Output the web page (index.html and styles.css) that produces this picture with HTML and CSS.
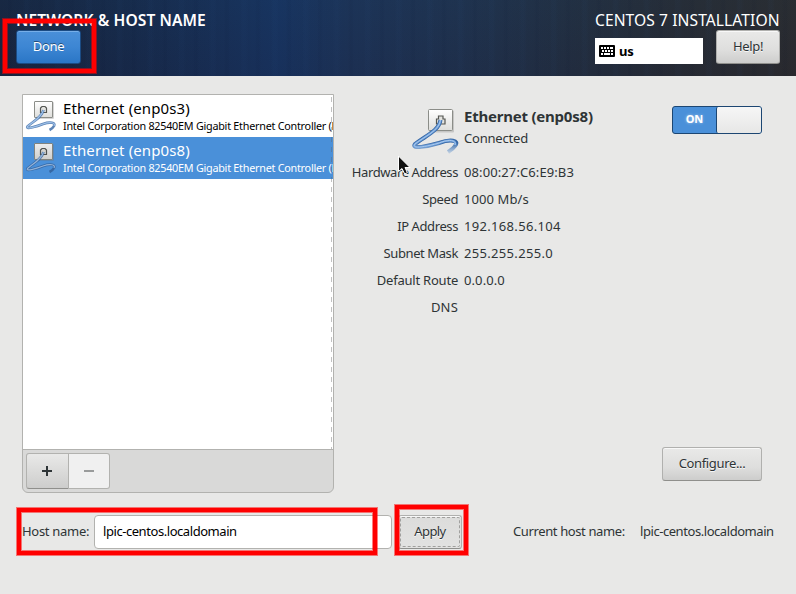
FILE: index.html
```html
<!DOCTYPE html>
<html lang="en">
<head>
<meta charset="utf-8">
<title>Network &amp; Host Name</title>
<link rel="stylesheet" href="styles.css">
</head>
<body>
<svg class="defs" width="0" height="0" aria-hidden="true">
  <defs>
    <linearGradient id="plate" x1="0" y1="0" x2="0" y2="1"><stop offset="0" stop-color="#fff"/><stop offset="1" stop-color="#dededb"/></linearGradient>
    <linearGradient id="fade" gradientUnits="userSpaceOnUse" x1="0" y1="37" x2="0" y2="47"><stop offset="0" stop-color="#3465a4"/><stop offset="1" stop-color="#5f93d1" stop-opacity=".3"/></linearGradient>
    <symbol id="ethernet" viewBox="0 0 48 48">
      <rect x="18" y="4.500" width="25" height="22" rx="1" fill="#777" opacity=".3"/>
      <rect x="17.500" y="3.500" width="24" height="21" rx="1" fill="url(#plate)" stroke="#8b8d88"/>
      <path d="M25.500 18v-5h2v-3h4.500v3h2v5z" fill="#e3e3df" stroke="#555753" stroke-width="1.200"/>
      <path d="M29.500 14C28 25 14 30 4 38C-1 44 18 40 28 37C39 33 49 34 44 40C42 43 40 44 37 46" fill="none" stroke="url(#fade)" stroke-width="4"/>
      <path d="M29.500 14C28 25 14 30 4 38C-1 44 18 40 28 37C38 33 46 34 44 39" fill="none" stroke="#6a9cd8" stroke-width="2.400"/>
      <path d="M29.500 14C28 25 14 30 4 38C-1 44 18 40 28 37C38 33 46 34 44 39" fill="none" stroke="#b4d0ef" stroke-width=".9"/>
    </symbol>
    <symbol id="ethernet-small" viewBox="0 0 32 32">
      <rect x="10" y="2" width="19" height="17" rx="1" fill="#777" opacity=".3"/>
      <rect x="9.500" y="1.500" width="18" height="16" rx=".5" fill="url(#plate)" stroke="#8b8d88"/>
      <path d="M15.500 12.500v-4.500l1.500-1.500h3l1.500 1.500v4.500z" fill="#e3e3df" stroke="#555753" stroke-width="1.200"/>
      <path d="M18.500 10C17 17 9 21 2.500 26.500C0 30 13 26 18 24C25 21.500 31 22.500 29 26C28 28 26.500 29 24.500 30" fill="none" stroke="#3465a4" stroke-width="2.600" opacity=".8"/>
      <path d="M18.500 10C17 17 9 21 2.500 26.500C0 30 13 26 18 24C25 21.500 31 22.500 29 26" fill="none" stroke="#9fc1e8" stroke-width="1.200"/>
    </symbol>
  </defs>
</svg>
<header class="header">
  <div class="header-side">
    <h1 class="title">NETWORK &amp; HOST NAME</h1>
    <button class="btn btn-done"><span>Done</span></button>
  </div>
  <div class="header-side header-right">
    <div class="product">CENTOS 7 INSTALLATION</div>
    <div class="header-tools">
      <div class="keyboard">
        <svg width="16" height="12" viewBox="0 0 16 12"><rect width="16" height="12" rx="1"/><path d="M2 3h12M3 6h11M2 9h2M5 9h6M12 9h2" stroke="#fff" stroke-width="2" fill="none"/><path d="M4.500 2v2M7.500 2v2M10.500 2v2M5.500 5v2M8.500 5v2M11.500 5v2" stroke="#000"/></svg>
        <b>us</b>
      </div>
      <button class="btn btn-help"><span>Help!</span></button>
    </div>
  </div>
  <div class="mark mark-done"></div>
</header>
<main class="main">
  <div class="columns">
    <section class="devices">
      <div class="device-list">
        <div class="device">
          <svg class="device-icon" viewBox="0 0 32 32"><use href="#ethernet-small"/></svg>
          <div class="device-text"><div class="device-name">Ethernet (enp0s3)</div><div class="device-desc">Intel Corporation 82540EM Gigabit Ethernet Controller (P</div></div>
        </div>
        <div class="device selected">
          <svg class="device-icon" viewBox="0 0 32 32"><use href="#ethernet-small"/></svg>
          <div class="device-text"><div class="device-name">Ethernet (enp0s8)</div><div class="device-desc">Intel Corporation 82540EM Gigabit Ethernet Controller (P</div></div>
        </div>
      </div>
      <div class="list-tools">
        <button class="tool add"><svg width="12" height="12"><path d="M6 1v10M1 6h10" stroke="#2e3436" stroke-width="2"/></svg></button>
        <button class="tool remove"><svg width="12" height="12"><path d="M1 6h10" stroke="#999b9b" stroke-width="2"/></svg></button>
      </div>
    </section>
    <section class="details">
      <div class="details-head">
        <svg class="big-icon" width="48" height="48" viewBox="0 0 48 48"><use href="#ethernet"/></svg>
        <div class="status"><div class="status-name">Ethernet (enp0s8)</div><div class="status-state">Connected</div></div>
        <div class="switch"><span class="switch-on">ON</span><span class="knob"></span></div>
      </div>
      <dl class="facts">
        <dt>Hardware Address</dt><dd>08:00:27:C6:E9:B3</dd>
        <dt>Speed</dt><dd>1000 Mb/s</dd>
        <dt>IP Address</dt><dd class="dotted">192.168.56.104</dd>
        <dt>Subnet Mask</dt><dd class="dotted">255.255.255.0</dd>
        <dt class="route">Default Route</dt><dd>0.0.0.0</dd>
        <dt class="short">DNS</dt><dd></dd>
      </dl>
      <button class="btn btn-configure"><span>Configure...</span></button>
      <svg class="cursor" width="14" height="20" viewBox="0 0 14 20"><path d="M.500 1v15.500l3.500-3 2.700 5.500 2.600-1.300L7 12.500H12z" fill="#111" stroke="#fff"/></svg>
    </section>
  </div>
  <div class="host-row">
    <label class="host-label">Host name:</label>
    <div class="entry">lpic-centos.localdomain</div>
    <button class="btn btn-apply"><span>Apply</span></button>
    <span class="current-label">Current host name:</span>
    <span class="current-name">lpic-centos.localdomain</span>
    <div class="mark mark-host"></div>
    <div class="mark mark-apply"></div>
  </div>
</main>
</body>
</html>
```
FILE: styles.css
```css
* { box-sizing: border-box; }
body { margin: 0; width: 796px; height: 594px; overflow: hidden; background: #e8e8e7; color: #2e3436; font: 13px/18px "Noto Sans", "Open Sans", sans-serif; letter-spacing: -0.1px; }
.defs { display: block; }
button { font: inherit; color: inherit; letter-spacing: inherit; padding: 0; margin: 0; }
.header { position: relative; height: 76px; padding: 10px 16px 0; display: flex; justify-content: space-between; color: #fff;
  background:
    linear-gradient(180deg, rgba(20, 60, 110, 0.1), rgba(20, 20, 60, 0.12)),
    repeating-linear-gradient(90deg, transparent 0 7px, rgba(0, 10, 35, 0.05) 9px 11px, transparent 13px 23px, rgba(50, 100, 160, 0.04) 25px 28px, transparent 31px),
    linear-gradient(90deg, #18263e 0, #172a48 120px, #183056 225px, #18345f 280px, #1d3355 350px, #20324c 460px, #232f3f 570px, #282c32 680px, #2c2c2c 796px); }
.header-side { display: flex; flex-direction: column; align-items: flex-start; }
.header-right { width: 185px; align-items: stretch; }
.title, .product { margin: 0; height: 20px; font-size: 15.6px; line-height: 20px; white-space: nowrap; }
.title { font-weight: 600; letter-spacing: 0.08px; }
.product { letter-spacing: 0.08px; }
.header-tools { display: flex; justify-content: space-between; align-items: flex-end; }
.keyboard { width: 108px; height: 26px; padding-left: 4px; display: flex; align-items: center; gap: 4px; background: #fff; color: #000; }
.keyboard b { padding-bottom: 1px; }
.btn { height: 34px; display: flex; align-items: center; justify-content: center; padding-bottom: 2px; border: 1px solid #b0b0ae; border-bottom-color: #8f8f8c; border-radius: 3px; background: linear-gradient(#e9e9e8, #dededd 60%, #cdcdcc); box-shadow: inset 0 1px #f8f8f8; color: #2e3436; letter-spacing: -0.35px; text-shadow: 0 1px rgba(255, 255, 255, 0.8); }
.btn-done { width: 65px; border-color: #1b4b83; background: linear-gradient(#4a90d9, #3d86d3 50%, #2a76c6); box-shadow: inset 0 1px #76aee8; color: #fff; text-shadow: 0 -1px rgba(0, 0, 0, 0.45); }
.btn-help { width: 64px; }
.mark { position: absolute; border: 4px solid #f00; box-shadow: 0 0 0 1px rgba(255, 0, 0, 0.5), inset 0 0 0 1px rgba(255, 0, 0, 0.5); pointer-events: none; }
.mark-done { left: 3px; top: 19px; width: 93px; height: 54px; }
.main { padding: 18px 22px 0; }
.columns { display: flex; height: 399px; }
.devices { width: 312px; display: flex; flex-direction: column; border: 1px solid #b2b2af; border-radius: 0 0 6px 6px; overflow: hidden; background: #d9d9d8; }
.device-list { position: relative; height: 355px; border-bottom: 1px solid #b2b2af; background: #fff; color: #000; overflow: hidden; }
.device-list::after { content: ""; position: absolute; right: 1px; top: 2px; bottom: 0; width: 1px; background: repeating-linear-gradient(rgba(100, 100, 100, 0.4) 0 5px, transparent 5px 10px); }
.device { height: 42px; display: flex; gap: 6px; padding-left: 2px; overflow: hidden; }
.device.selected { background: #4a90d9; color: #fff; }
.selected .device-icon { filter: brightness(0.93); }
.device-icon { width: 32px; height: 32px; margin-top: 5px; flex: none; }
.device-text { white-space: nowrap; }
.device-name { font-size: 15px; line-height: 20px; margin: 3px 0 1px; letter-spacing: 0.1px; }
.device-desc { font-size: 10.8px; line-height: 14px; letter-spacing: -0.25px; }
.list-tools { display: flex; padding: 3px; }
.tool { height: 36px; border: 1px solid #b2b2af; display: flex; align-items: center; justify-content: center; }
.add { width: 43px; padding-right: 2px; border-radius: 3px 0 0 3px; background: linear-gradient(#e9e9e8, #cdcdcc); border-bottom-color: #8f8f8c; }
.remove { width: 41px; border-left: 0; border-radius: 0 3px 3px 0; background: #f0f0f0; }
.details { position: relative; width: 440px; flex: none; margin-right: -22px; padding-top: 12px; display: flex; flex-direction: column; }
.details-head { display: flex; height: 53px; padding-left: 77px; margin-right: 12px; }
.big-icon { flex: none; }
.status { margin-left: 5px; flex: 1; white-space: nowrap; }
.status-name { font-size: 15px; line-height: 20px; font-weight: 700; letter-spacing: -0.22px; }
.status-state { line-height: 20px; margin-top: 2px; letter-spacing: -0.4px; }
.switch { width: 90px; height: 28px; border: 1px solid #1c4672; border-radius: 3px; display: flex; background: #4a90d9; color: #fff; font-size: 11px; font-weight: 700; }
.switch-on { flex: 1; text-align: center; line-height: 24px; letter-spacing: 0; text-shadow: 0 0 3px rgba(255, 255, 255, 0.5); }
.status-state { letter-spacing: -0.2px; }
.knob { width: 45px; border-left: 1px solid #1c4672; border-radius: 2px; background: linear-gradient(#f6f6f6, #e7e7e6); }
.facts { margin: 0; display: grid; grid-template-columns: 124px 1fr; column-gap: 6px; grid-auto-rows: 27px; line-height: 27px; white-space: nowrap; }
.facts dt { text-align: right; letter-spacing: -0.4px; }
.facts .route { letter-spacing: -0.22px; }
.facts .short { letter-spacing: 0.2px; }
.facts dd { margin: 0; letter-spacing: 0.1px; }
.facts .dotted { letter-spacing: 0.32px; }
.btn-configure { width: 100px; margin: auto 12px 12px auto; }
.cursor { position: absolute; left: 64px; top: 61px; }
.host-row { position: relative; display: flex; align-items: center; height: 34px; margin-top: 22px; white-space: nowrap; }
.host-row > * { flex: none; }
.host-label { width: 72px; padding-bottom: 2px; letter-spacing: -0.3px; }
.entry { width: 298px; height: 34px; padding-left: 8px; border: 1px solid #b2b2af; border-radius: 4px; background: #fff; color: #000; line-height: 30px; letter-spacing: -0.44px; }
.btn-apply { width: 64px; margin-left: 6px; position: relative; background: linear-gradient(#dcdcdb, #e2e2e1); letter-spacing: -0.6px; }
.btn-apply::after { content: ""; position: absolute; inset: 1px; border: 1px dashed #a0a09e; border-radius: 2px; }
.current-label { margin-left: 51px; width: 127px; padding-bottom: 2px; letter-spacing: -0.38px; }
.current-name { padding-bottom: 2px; letter-spacing: -0.44px; }
.mark-host { left: -5px; top: -7px; width: 360px; height: 47px; }
.mark-apply { left: 373px; top: -10px; width: 73px; height: 50px; }
```
